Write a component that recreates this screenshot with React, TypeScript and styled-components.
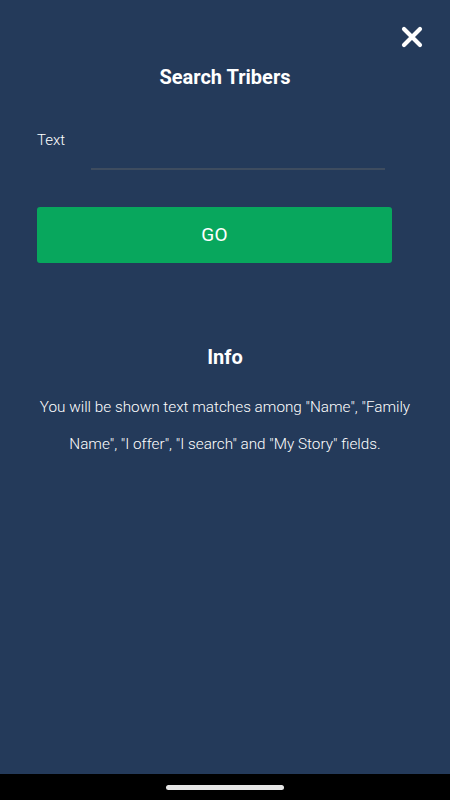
import React, { useState } from "react";
import styled, { createGlobalStyle } from "styled-components";

const GlobalStyle = createGlobalStyle`
  html, body {
    margin: 0;
    padding: 0;
    background: #000;
  }
  body {
    font-family: Roboto, "Liberation Sans", sans-serif;
  }
`;

const Screen = styled.div`
  width: 450px;
  height: 800px;
  display: flex;
  flex-direction: column;
  background: #000;
  overflow: hidden;
`;

const Panel = styled.main`
  flex: 1;
  display: flex;
  flex-direction: column;
  background-color: #243a5a;
  color: white;
  padding: 0 37px;
  position: relative;
`;

const CloseButton = styled.button`
  position: absolute;
  top: 26px;
  right: 27px;
  width: 22px;
  height: 22px;
  padding: 0;
  border: none;
  background: transparent;
  cursor: pointer;
  display: flex;
  align-items: center;
  justify-content: center;
`;

const Title = styled.h1`
  margin: 64px 0 0 0;
  font-size: 20px;
  line-height: 26px;
  font-weight: 700;
  text-align: center;
`;

const Field = styled.label`
  margin-top: 40px;
  display: flex;
  flex-direction: column;
`;

const FieldLabel = styled.span`
  font-size: 15px;
  font-weight: 300;
  line-height: 20px;
`;

const Input = styled.input`
  margin: 0 28px 0 54px;
  height: 18px;
  border: none;
  border-bottom: 2px solid #3e4c5f;
  background: transparent;
  color: white;
  font-family: inherit;
  font-size: 15px;
  outline: none;
  padding: 0;
`;

const GoButton = styled.button`
  margin: 37px 21px 0 0;
  height: 56px;
  padding-bottom: 3px;
  border: none;
  border-radius: 3px;
  background-color: #08a75d;
  color: white;
  font-family: inherit;
  font-size: 19px;
  font-weight: 400;
  letter-spacing: 0.3px;
  cursor: pointer;
`;

const InfoTitle = styled.h2`
  margin: 81px 0 0 0;
  font-size: 20px;
  line-height: 26px;
  font-weight: 700;
  text-align: center;
`;

const InfoText = styled.p`
  margin: 19px -6px 0 -6px;
  font-size: 15.3px;
  font-weight: 300;
  line-height: 37px;
  text-align: center;
`;

const NavBar = styled.div`
  height: 26px;
  flex-shrink: 0;
  background: #000;
  display: flex;
  align-items: center;
  justify-content: center;
`;

const HomeIndicator = styled.div`
  width: 118px;
  height: 5px;
  border-radius: 3px;
  background: #e6e6e6;
`;

const App = () => {
  const [query, setQuery] = useState("");

  return (
    <>
      <GlobalStyle />
      <Screen>
        <Panel>
          <CloseButton aria-label="Close">
            <svg width="22" height="22" viewBox="0 0 22 22">
              <path
                d="M3 3 L19 19 M19 3 L3 19"
                stroke="white"
                strokeWidth="4.2"
                strokeLinecap="round"
              />
            </svg>
          </CloseButton>

          <Title>Search Tribers</Title>

          <Field>
            <FieldLabel>Text</FieldLabel>
            <Input value={query} onChange={(e) => setQuery(e.target.value)} />
          </Field>

          <GoButton>GO</GoButton>

          <InfoTitle>Info</InfoTitle>
          <InfoText>
            You will be shown text matches among "Name", "Family Name", "I
            offer", "I search" and "My Story" fields.
          </InfoText>
        </Panel>
        <NavBar>
          <HomeIndicator />
        </NavBar>
      </Screen>
    </>
  );
};

export default App;
